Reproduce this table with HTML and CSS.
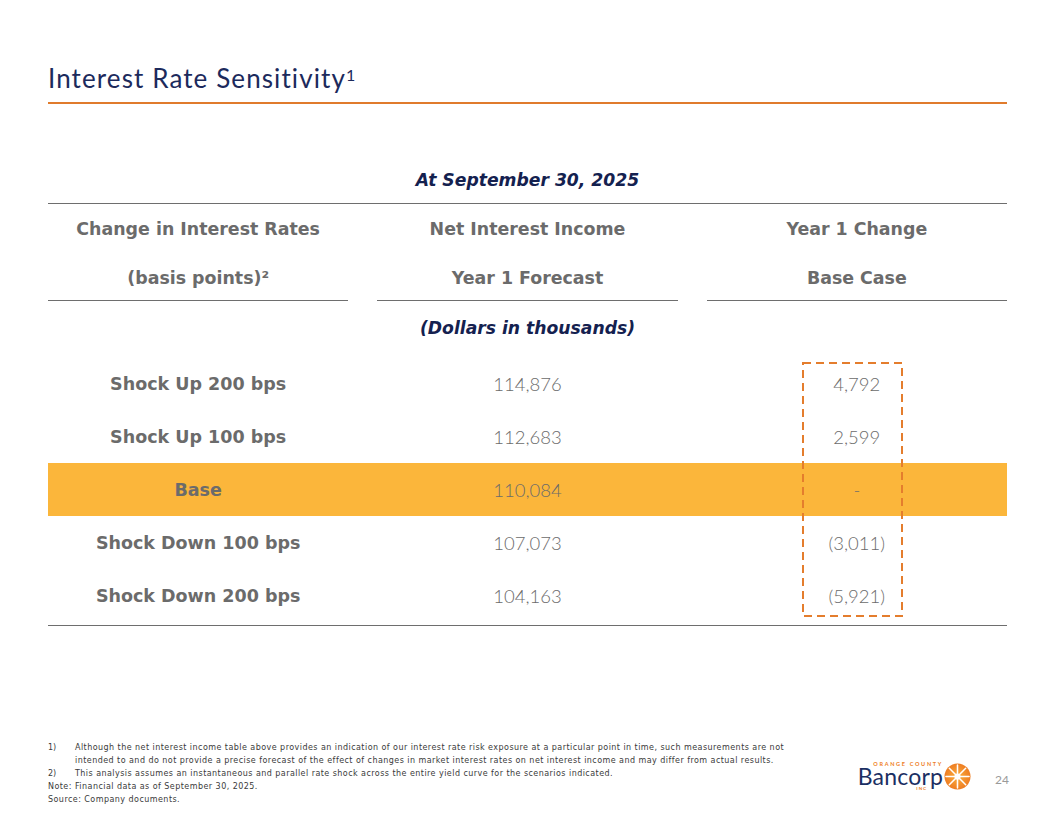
FILE: index.html
```html
<!DOCTYPE html>
<html lang="en">
<head>
<meta charset="utf-8">
<title>Interest Rate Sensitivity</title>
<link rel="stylesheet" href="styles.css">
</head>
<body>
<div class="slide">
  <header class="title-bar">
    <h1 class="title">Interest Rate Sensitivity<sup>1</sup></h1>
  </header>

  <section class="table">
    <div class="caption">At September 30, 2025</div>
    <div class="rule"></div>
    <div class="head">
      <div class="hcell"><span>Change in Interest Rates</span><span>(basis points)²</span></div>
      <div class="hcell"><span>Net Interest Income</span><span>Year 1 Forecast</span></div>
      <div class="hcell"><span>Year 1 Change</span><span>Base Case</span></div>
    </div>
    <div class="caption sub">(Dollars in thousands)</div>
    <div class="body">
      <div class="row"><div class="label">Shock Up 200 bps</div><div class="num">114,876</div><div class="num">4,792</div></div>
      <div class="row"><div class="label">Shock Up 100 bps</div><div class="num">112,683</div><div class="num">2,599</div></div>
      <div class="row base"><div class="label">Base</div><div class="num">110,084</div><div class="num">-</div></div>
      <div class="row"><div class="label">Shock Down 100 bps</div><div class="num">107,073</div><div class="num">(3,011)</div></div>
      <div class="row"><div class="label">Shock Down 200 bps</div><div class="num">104,163</div><div class="num">(5,921)</div></div>
      <svg class="dash-box" width="101" height="255" viewBox="0 0 101 255">
        <rect x="1" y="1" width="99" height="253" fill="none" stroke="#e47d2d" stroke-width="2" stroke-dasharray="8 5"/>
      </svg>
    </div>
    <div class="rule bottom"></div>
  </section>

  <footer class="foot">
    <div class="notes">
      <div class="note"><span class="n">1)</span><span class="t">Although the net interest income table above provides an indication of our interest rate risk exposure at a particular point in time, such measurements are not intended to and do not provide a precise forecast of the effect of changes in market interest rates on net interest income and may differ from actual results.</span></div>
      <div class="note"><span class="n">2)</span><span class="t">This analysis assumes an instantaneous and parallel rate shock across the entire yield curve for the scenarios indicated.</span></div>
      <div class="plain">Note: Financial data as of September 30, 2025.</div>
      <div class="plain">Source: Company documents.</div>
    </div>
    <div class="brand">
      <div class="logo">
        <div class="logo-text">
          <span class="oc">ORANGE COUNTY</span>
          <span class="bn">Bancorp</span>
          <span class="inc">INC</span>
        </div>
        <svg class="sun" width="27" height="27" viewBox="0 0 28 28">
          <defs>
            <radialGradient id="g" cx="50%" cy="50%" r="50%">
              <stop offset="0%" stop-color="#fbb040"/>
              <stop offset="100%" stop-color="#ee7d22"/>
            </radialGradient>
          </defs>
          <circle cx="14" cy="14" r="13.5" fill="url(#g)"/>
          <g stroke="#fff" stroke-width="1.6" stroke-linecap="round">
            <line x1="14" y1="2" x2="14" y2="26"/>
            <line x1="2" y1="14" x2="26" y2="14"/>
            <line x1="5.5" y1="5.5" x2="22.5" y2="22.5"/>
            <line x1="22.5" y1="5.5" x2="5.5" y2="22.5"/>
          </g>
          <circle cx="14" cy="14" r="3.2" fill="#fff"/>
        </svg>
      </div>
      <div class="page">24</div>
    </div>
  </footer>
</div>
</body>
</html>
```
FILE: styles.css
```css
* { box-sizing: border-box; margin: 0; padding: 0; }
html, body { width: 1056px; height: 816px; background: #fff; }
body { font-family: "Lato", "Open Sans", sans-serif; color: #666; }

.slide { width: 1056px; height: 816px; padding: 60px 49px 0 48px; display: flex; flex-direction: column; }

.title-bar { border-bottom: 2px solid #e07b2c; padding-bottom: 6px; }
.title { font-weight: 400; font-size: 26px; line-height: 36px; color: #1c2a5c; letter-spacing: 1.1px; }
.title sup { font-size: 16px; vertical-align: top; position: relative; top: -3px; margin-left: 0; letter-spacing: 0; }

.table { margin-top: 61px; display: flex; flex-direction: column; }
.caption { text-align: center; font-family: "DejaVu Sans", sans-serif; font-weight: 700; font-style: italic; font-size: 17.2px; line-height: 30px; color: #14214f; }
.caption.sub { line-height: 28px; margin-top: 13px; margin-bottom: 15px; }
.rule { height: 1px; background: #6e6e6e; margin-top: 8px; }
.rule.bottom { margin-top: 3px; }

.head { display: grid; grid-template-columns: 1fr 1fr 1fr; column-gap: 29px; }
.hcell { display: flex; flex-direction: column; align-items: center; gap: 19px; border-bottom: 1px solid #6e6e6e; padding-top: 10px; padding-bottom: 7px; font-family: "DejaVu Sans", sans-serif; font-weight: 700; font-size: 17.4px; color: #6b6b6b; }
.hcell span { line-height: 30px; }

.body { position: relative; display: flex; flex-direction: column; }
.row { display: grid; grid-template-columns: 1fr 1fr 1fr; column-gap: 29px; height: 53px; align-items: center; text-align: center; }
.row.base { background: #fbb63b; }
.label { font-family: "DejaVu Sans", sans-serif; font-weight: 700; font-size: 17.5px; color: #6b6b6b; }
.num { font-weight: 300; font-size: 18.5px; color: #6b6b6b; }
.dash-box { position: absolute; left: 754px; top: 5px; }

.foot { margin-top: auto; display: flex; align-items: flex-end; justify-content: space-between; padding-bottom: 10px; }
.notes { font-family: "DejaVu Sans", sans-serif; font-size: 8px; line-height: 13px; color: #3a3a3a; width: 760px; letter-spacing: 0.45px; }
.note { display: flex; }
.note .n { width: 27px; flex: none; letter-spacing: 0; }
.note .t { width: 722px; }
.brand { display: flex; align-items: center; gap: 24px; margin-bottom: 14px; margin-right: -2px; }
.logo { display: flex; align-items: center; gap: 1px; }
.logo-text { display: flex; flex-direction: column; align-items: flex-end; }
.oc { font-size: 5.5px; font-weight: 700; letter-spacing: 1.7px; color: #ee7d22; line-height: 6px; }
.bn { font-size: 23px; font-weight: 400; color: #1b2f63; line-height: 18px; letter-spacing: 0.2px; }
.inc { font-size: 4.5px; font-weight: 700; letter-spacing: 1px; color: #ee7d22; line-height: 7px; margin-right: 16px; }
.page { font-size: 12px; color: #9a9a9a; margin-bottom: -6px; }
```
